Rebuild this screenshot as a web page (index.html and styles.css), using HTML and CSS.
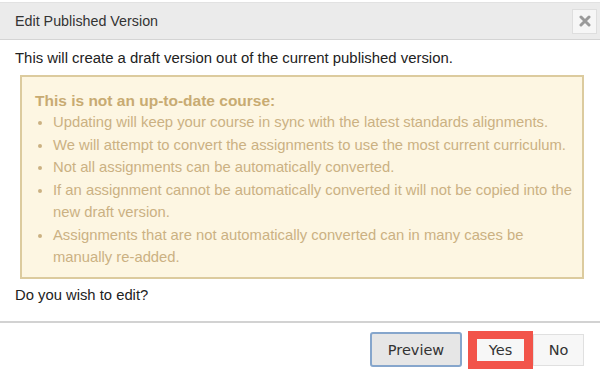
FILE: index.html
```html
<!DOCTYPE html>
<html>
<head>
<meta charset="utf-8">
<link rel="stylesheet" href="styles.css">
</head>
<body>
<div class="dialog">
  <div class="header">
    <span class="title">Edit Published Version</span>
    <button class="close" aria-label="Close">
      <svg width="12" height="12" viewBox="0 0 12 12"><path d="M2 2 L10 10 M10 2 L2 10" stroke="#9a9a9a" stroke-width="3" stroke-linecap="round"/></svg>
    </button>
  </div>
  <div class="content">
    <p class="intro">This will create a draft version out of the current published version.</p>
    <div class="warning">
      <div class="warning-title">This is not an up-to-date course:</div>
      <ul class="warning-list">
        <li>Updating will keep your course in sync with the latest standards alignments.</li>
        <li>We will attempt to convert the assignments to use the most current curriculum.</li>
        <li>Not all assignments can be automatically converted.</li>
        <li>If an assignment cannot be automatically converted it will not be copied into the new draft version.</li>
        <li>Assignments that are not automatically converted can in many cases be manually re-added.</li>
      </ul>
    </div>
    <p class="question">Do you wish to edit?</p>
  </div>
  <div class="footer">
    <button class="btn btn-preview">Preview</button>
    <button class="btn btn-yes">Yes</button>
    <button class="btn btn-no">No</button>
  </div>
</div>
</body>
</html>
```

FILE: styles.css
```css
html, body {
  margin: 0;
  padding: 0;
  background: #ffffff;
}
body {
  font-family: "Liberation Sans", Arial, sans-serif;
  color: #333333;
}
.dialog {
  width: 600px;
  height: 378px;
  padding-top: 2px;
  box-sizing: border-box;
}
.header {
  height: 36px;
  background: #ebebeb;
  border-top: 1px solid #e2e2e2;
  border-bottom: 1px solid #d4d4d4;
  display: flex;
  align-items: center;
  justify-content: space-between;
  padding: 0 3px 0 15px;
}
.title {
  font-size: 14.3px;
  color: #333;
}
.close {
  width: 25px;
  height: 25px;
  padding: 0;
  margin: 0;
  border: 1px solid #dedede;
  background: #f6f6f6;
  display: flex;
  align-items: center;
  justify-content: center;
}
.content {
  padding: 0 16px 0 15px;
}
.intro {
  margin: 0;
  padding-top: 9px;
  font-size: 14.9px;
  line-height: 18px;
  color: #222;
}
.warning {
  margin: 8px 0 0 5px;
  border: 2px solid #dccb9e;
  background: #fdf6e2;
  padding: 14px 2px 8px 13px;
  color: #cbb182;
}
.warning-title {
  font-weight: bold;
  font-size: 15.5px;
  line-height: 20px;
  color: #c8ab72;
}
.warning-list {
  margin: 0;
  padding: 0 0 0 18px;
  font-size: 14.8px;
  line-height: 22.5px;
}
.question {
  margin: 7px 0 0;
  font-size: 14.8px;
  line-height: 18px;
  color: #222;
}
.footer {
  margin-top: 17px;
  border-top: 2px solid #d2d2d2;
  display: flex;
  justify-content: flex-end;
  align-items: center;
  height: 54px;
  padding-right: 16px;
}
.btn {
  font-family: "DejaVu Sans", Verdana, sans-serif;
  font-size: 14.5px;
  color: #333;
  box-sizing: border-box;
  margin: 0;
  padding: 0;
}
.btn-preview {
  width: 92px;
  height: 35px;
  border: 2px solid #86a6cc;
  border-radius: 3px;
  background: #e6e6e6;
  margin-right: 6px;
}
.btn-yes {
  width: 65px;
  height: 38px;
  border: 8px solid #f2544a;
  border-left-width: 9px;
  border-right-width: 9px;
  background: #f7f7f7;
}
.btn-no {
  width: 51px;
  height: 32px;
  border: 1px solid #e0e0e0;
  background: #f7f7f7;
}
```
